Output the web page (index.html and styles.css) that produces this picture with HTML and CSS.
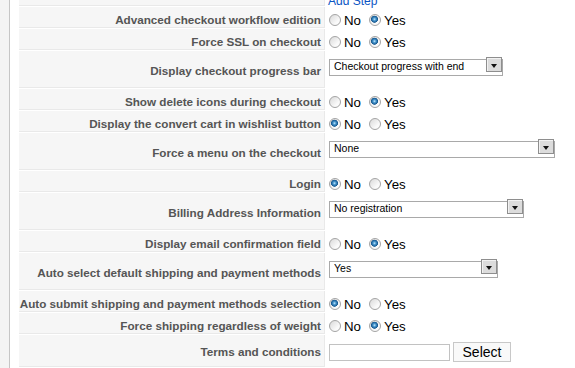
FILE: index.html
```html
<!DOCTYPE html>
<html lang="en">
<head>
    <meta charset="UTF-8">
    <title>Checkout parameters</title>
    <link rel="stylesheet" href="styles.css">
</head>
<body>
<div class="page">
    <div class="sidebar"></div>
    <div class="panel">
        <table class="params">
            <tr class="row-top">
                <td class="key"></td>
                <td class="value value-link"><a href="#">Add Step</a></td>
            </tr>
            <tr>
                <td class="key">Advanced checkout workflow edition</td>
                <td class="value">
                    <div class="options">
                        <label class="opt"><input type="radio" name="workflow"> No</label>
                        <label class="opt"><input type="radio" name="workflow" checked> Yes</label>
                    </div>
                </td>
            </tr>
            <tr>
                <td class="key">Force SSL on checkout</td>
                <td class="value">
                    <div class="options">
                        <label class="opt"><input type="radio" name="ssl"> No</label>
                        <label class="opt"><input type="radio" name="ssl" checked> Yes</label>
                    </div>
                </td>
            </tr>
            <tr class="row-select">
                <td class="key">Display checkout progress bar</td>
                <td class="value">
                    <span class="select w-progress">
                        <select><option>Checkout progress with end</option></select>
                        <span class="select-arrow"></span>
                    </span>
                </td>
            </tr>
            <tr>
                <td class="key">Show delete icons during checkout</td>
                <td class="value">
                    <div class="options">
                        <label class="opt"><input type="radio" name="delete"> No</label>
                        <label class="opt"><input type="radio" name="delete" checked> Yes</label>
                    </div>
                </td>
            </tr>
            <tr>
                <td class="key">Display the convert cart in wishlist button</td>
                <td class="value">
                    <div class="options">
                        <label class="opt"><input type="radio" name="wishlist" checked> No</label>
                        <label class="opt"><input type="radio" name="wishlist"> Yes</label>
                    </div>
                </td>
            </tr>
            <tr class="row-select">
                <td class="key">Force a menu on the checkout</td>
                <td class="value">
                    <span class="select w-menu">
                        <select><option>None</option></select>
                        <span class="select-arrow"></span>
                    </span>
                </td>
            </tr>
            <tr>
                <td class="key">Login</td>
                <td class="value">
                    <div class="options">
                        <label class="opt"><input type="radio" name="login" checked> No</label>
                        <label class="opt"><input type="radio" name="login"> Yes</label>
                    </div>
                </td>
            </tr>
            <tr class="row-select">
                <td class="key">Billing Address Information</td>
                <td class="value">
                    <span class="select w-billing">
                        <select><option>No registration</option></select>
                        <span class="select-arrow"></span>
                    </span>
                </td>
            </tr>
            <tr>
                <td class="key">Display email confirmation field</td>
                <td class="value">
                    <div class="options">
                        <label class="opt"><input type="radio" name="email"> No</label>
                        <label class="opt"><input type="radio" name="email" checked> Yes</label>
                    </div>
                </td>
            </tr>
            <tr class="row-select">
                <td class="key">Auto select default shipping and payment methods</td>
                <td class="value">
                    <span class="select w-auto">
                        <select><option>Yes</option></select>
                        <span class="select-arrow"></span>
                    </span>
                </td>
            </tr>
            <tr>
                <td class="key">Auto submit shipping and payment methods selection</td>
                <td class="value">
                    <div class="options">
                        <label class="opt"><input type="radio" name="submit" checked> No</label>
                        <label class="opt"><input type="radio" name="submit"> Yes</label>
                    </div>
                </td>
            </tr>
            <tr>
                <td class="key">Force shipping regardless of weight</td>
                <td class="value">
                    <div class="options">
                        <label class="opt"><input type="radio" name="weight"> No</label>
                        <label class="opt"><input type="radio" name="weight" checked> Yes</label>
                    </div>
                </td>
            </tr>
            <tr class="row-terms">
                <td class="key">Terms and conditions</td>
                <td class="value">
                    <div class="terms">
                        <input type="text" class="terms-input">
                        <button type="button" class="terms-btn">Select</button>
                    </div>
                </td>
            </tr>
        </table>
    </div>
</div>
</body>
</html>
```

FILE: styles.css
```css
body {
    margin: 0;
    font-family: 'Liberation Sans', Arial, sans-serif;
    background: #fff;
    color: #000;
    overflow: hidden;
}
.page {
    display: flex;
    height: 368px;
    overflow: hidden;
}
.sidebar {
    width: 9px;
    flex-shrink: 0;
    background-color: #f4f4f4;
    border-right: 1px solid #c6c6c6;
}
.panel {
    flex: 1;
    padding-left: 8px;
}
.params {
    border-collapse: separate;
    border-spacing: 1px;
    table-layout: fixed;
    width: 100%;
    margin-top: -16px;
}
.params td {
    box-sizing: border-box;
    height: 21px;
    padding: 0;
}
.params .key {
    width: 306px;
    background-color: #f6f6f6;
    border-bottom: 1px solid #e9e9e9;
    border-right: 1px solid #e9e9e9;
    color: #555;
    font-weight: bold;
    font-size: 11.7px;
    text-align: right;
    white-space: nowrap;
    padding: 0 3px 1px 0;
    vertical-align: bottom;
}
.params .value {
    vertical-align: bottom;
    padding: 0 0 0 3px;
    white-space: nowrap;
}
.params .value-link {
    padding-left: 2px;
    line-height: 10px;
}
.value-link a {
    color: #0b55c4;
    text-decoration: none;
    font-size: 12px;
}
.row-select td {
    height: 37px;
}
.params .row-select .key,
.params .row-terms .key {
    vertical-align: middle;
    padding: 2px 3px 0 0;
}
.params .row-select .value {
    vertical-align: top;
    padding-top: 5px;
}
.row-terms td {
    height: 32px;
}
.params .row-terms .value {
    vertical-align: middle;
    padding-top: 2px;
}

/* radio options */
.options {
    display: flex;
    align-items: center;
}
.opt {
    display: flex;
    align-items: center;
    font-size: 13.3px;
    margin-right: 8px;
}
.opt input {
    appearance: none;
    -webkit-appearance: none;
    width: 12px;
    height: 12px;
    margin: 0 3px 2px 0;
    border: 1px solid #a4a4a4;
    border-radius: 50%;
    background: linear-gradient(135deg, #d9d9d9, #fafafa 70%);
}
.opt input:checked {
    background:
        radial-gradient(circle at 45% 42%, #c8e9fb 0, #4b9ad0 1.4px, #15578f 3.2px, rgba(21, 87, 143, 0) 3.8px),
        linear-gradient(135deg, #d9d9d9, #fafafa 70%);
}

/* select boxes */
.select {
    position: relative;
    display: inline-block;
    height: 17px;
}
.select select {
    appearance: none;
    -webkit-appearance: none;
    box-sizing: border-box;
    width: 100%;
    height: 17px;
    margin: 0;
    padding: 0 0 2px 4px;
    border: 1px solid #a9a9a9;
    border-radius: 0;
    background: #fff;
    font-family: 'Liberation Sans', Arial, sans-serif;
    font-size: 10.5px;
    color: #000;
}
.select-arrow {
    position: absolute;
    top: 1px;
    right: 1px;
    width: 16px;
    height: 15px;
    box-sizing: border-box;
    background-color: #dcdcdc;
    border: 1px solid #8e8e8e;
    box-shadow: inset 1px 1px #f2f2f2;
}
.select-arrow::after {
    content: '';
    position: absolute;
    left: 4px;
    top: 6px;
    border-left: 3.5px solid transparent;
    border-right: 3.5px solid transparent;
    border-top: 4px solid #111;
}
.w-progress { width: 174px; }
.w-menu { width: 226px; }
.w-billing { width: 195px; }
.w-auto { width: 169px; }

/* terms */
.terms {
    display: flex;
    align-items: center;
    gap: 3px;
}
.terms-input {
    box-sizing: border-box;
    width: 121px;
    height: 17px;
    margin: 0;
    border: 1px solid #c2c2c2;
    background: #fff;
}
.terms-btn {
    box-sizing: border-box;
    width: 58px;
    height: 20px;
    margin: 0;
    padding: 0;
    border: 1px solid #c8c8c8;
    background: #f9f9f9;
    font-family: 'Liberation Sans', Arial, sans-serif;
    font-size: 14px;
    color: #000;
}
```
